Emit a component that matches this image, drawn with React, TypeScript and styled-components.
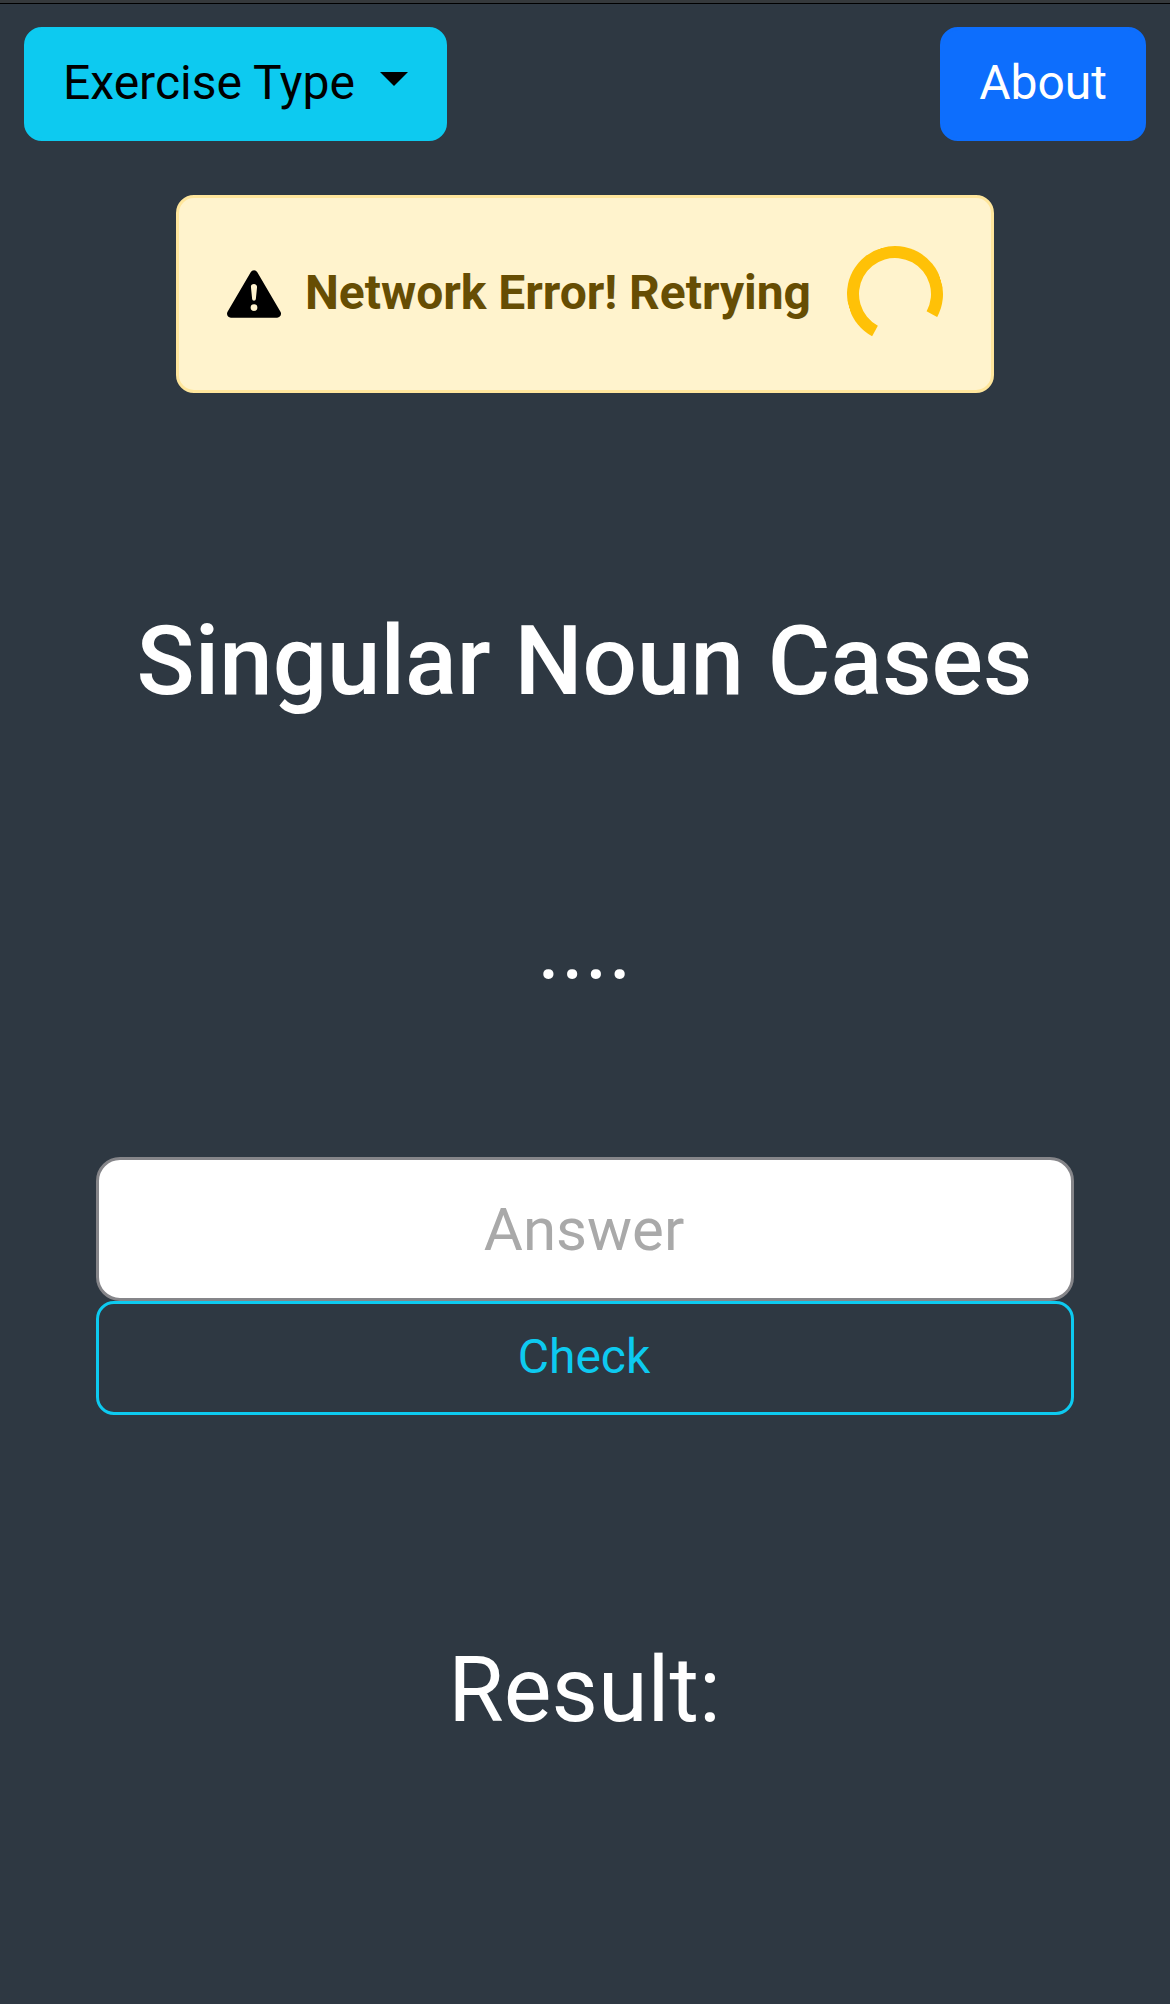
import React from "react";
import styled, { createGlobalStyle } from "styled-components";
import { BsExclamationTriangleFill } from "react-icons/bs";

const GlobalStyle = createGlobalStyle`
  *, *::before, *::after { box-sizing: border-box; }
  body {
    margin: 0;
    background: #2e3842;
    color: #fff;
    font-family: Roboto, "Liberation Sans", sans-serif;
    font-size: 48px;
    line-height: 72px;
  }
`;

const Page = styled.div`
  height: 2004px;
  overflow: hidden;
  display: flex;
  flex-direction: column;
  align-items: center;
  background: #2e3842;
`;

const TopEdge = styled.div`
  width: 100%;
  height: 4px;
  flex: none;
  background: #35393c;
  border-bottom: 1px solid #000;
`;

const Toolbar = styled.header`
  width: 100%;
  display: flex;
  justify-content: space-between;
  padding: 23px 24px 0;
`;

const Button = styled.button<{ $bg?: string; $fg: string; $line: string; $block?: boolean }>`
  height: 114px;
  width: ${(p) => (p.$block ? "100%" : "auto")};
  padding: ${(p) => (p.$block ? "17px 37px 19px 35px" : "17px 36px 19px")};
  border: 3px solid ${(p) => p.$line};
  border-radius: 18px;
  background: ${(p) => p.$bg ?? "transparent"};
  color: ${(p) => p.$fg};
  font: inherit;
  white-space: pre;
`;

const Caret = styled.span`
  display: inline-block;
  margin-left: 13.2px;
  vertical-align: 0.265em;
  border-top: 0.3em solid;
  border-right: 0.3em solid transparent;
  border-left: 0.3em solid transparent;
`;

const Alert = styled.div`
  display: flex;
  align-items: center;
  width: 818px;
  height: 198px;
  margin-top: 54px;
  padding: 0 48px;
  border: 3px solid #ffe69c;
  border-radius: 18px;
  background: #fff3cd;
  color: #664d03;
  font-weight: 700;
`;

const WarningIcon = styled(BsExclamationTriangleFill)`
  width: 54px;
  height: 54px;
  flex: none;
  color: #000;
`;

const AlertText = styled.span`
  margin-left: 24px;
  padding-bottom: 2px;
  letter-spacing: -0.03px;
  white-space: nowrap;
`;

const Spinner = styled.span`
  width: 96px;
  height: 96px;
  margin-left: auto;
  flex: none;
  border: 12px solid #ffc107;
  border-right-color: transparent;
  border-radius: 50%;
  transform: rotate(73.5deg);
`;

const Title = styled.h1`
  margin: 211px 0 0;
  padding-right: 1px;
  font-size: 96px;
  font-weight: 500;
  line-height: 115px;
`;

const Display = styled.p<{ $gap: number }>`
  margin: ${(p) => p.$gap}px 0 0;
  padding-right: 1px;
  font-size: 90px;
  line-height: 135px;
`;

const Form = styled.form`
  display: flex;
  flex-direction: column;
  width: 978px;
  margin-top: 142px;
`;

const Answer = styled.input`
  width: 100%;
  height: 144px;
  padding: 0 31px 0 29px;
  border: 3px solid #858589;
  border-radius: 24px;
  background: #fff;
  color: #000;
  font: inherit;
  font-size: 60px;
  text-align: center;
  outline: none;
  &::placeholder { color: #a9a9a9; opacity: 1; }
`;

export default function App() {
  return (
    <Page>
      <GlobalStyle />
      <TopEdge />
      <Toolbar>
        <Button $bg="#0dcaf0" $fg="#000" $line="#0dcaf0">
          {"Exercise Type "}
          <Caret />
        </Button>
        <Button $bg="#0d6efd" $fg="#fff" $line="#0d6efd">About</Button>
      </Toolbar>
      <Alert role="alert">
        <WarningIcon />
        <AlertText>Network Error! Retrying</AlertText>
        <Spinner />
      </Alert>
      <Title>Singular Noun Cases</Title>
      <Display $gap={161}>....</Display>
      <Form onSubmit={(e) => e.preventDefault()}>
        <Answer placeholder="Answer" />
        <Button $fg="#0dcaf0" $line="#0dcaf0" $block>Check</Button>
      </Form>
      <Display $gap={208}>Result:</Display>
    </Page>
  );
}
